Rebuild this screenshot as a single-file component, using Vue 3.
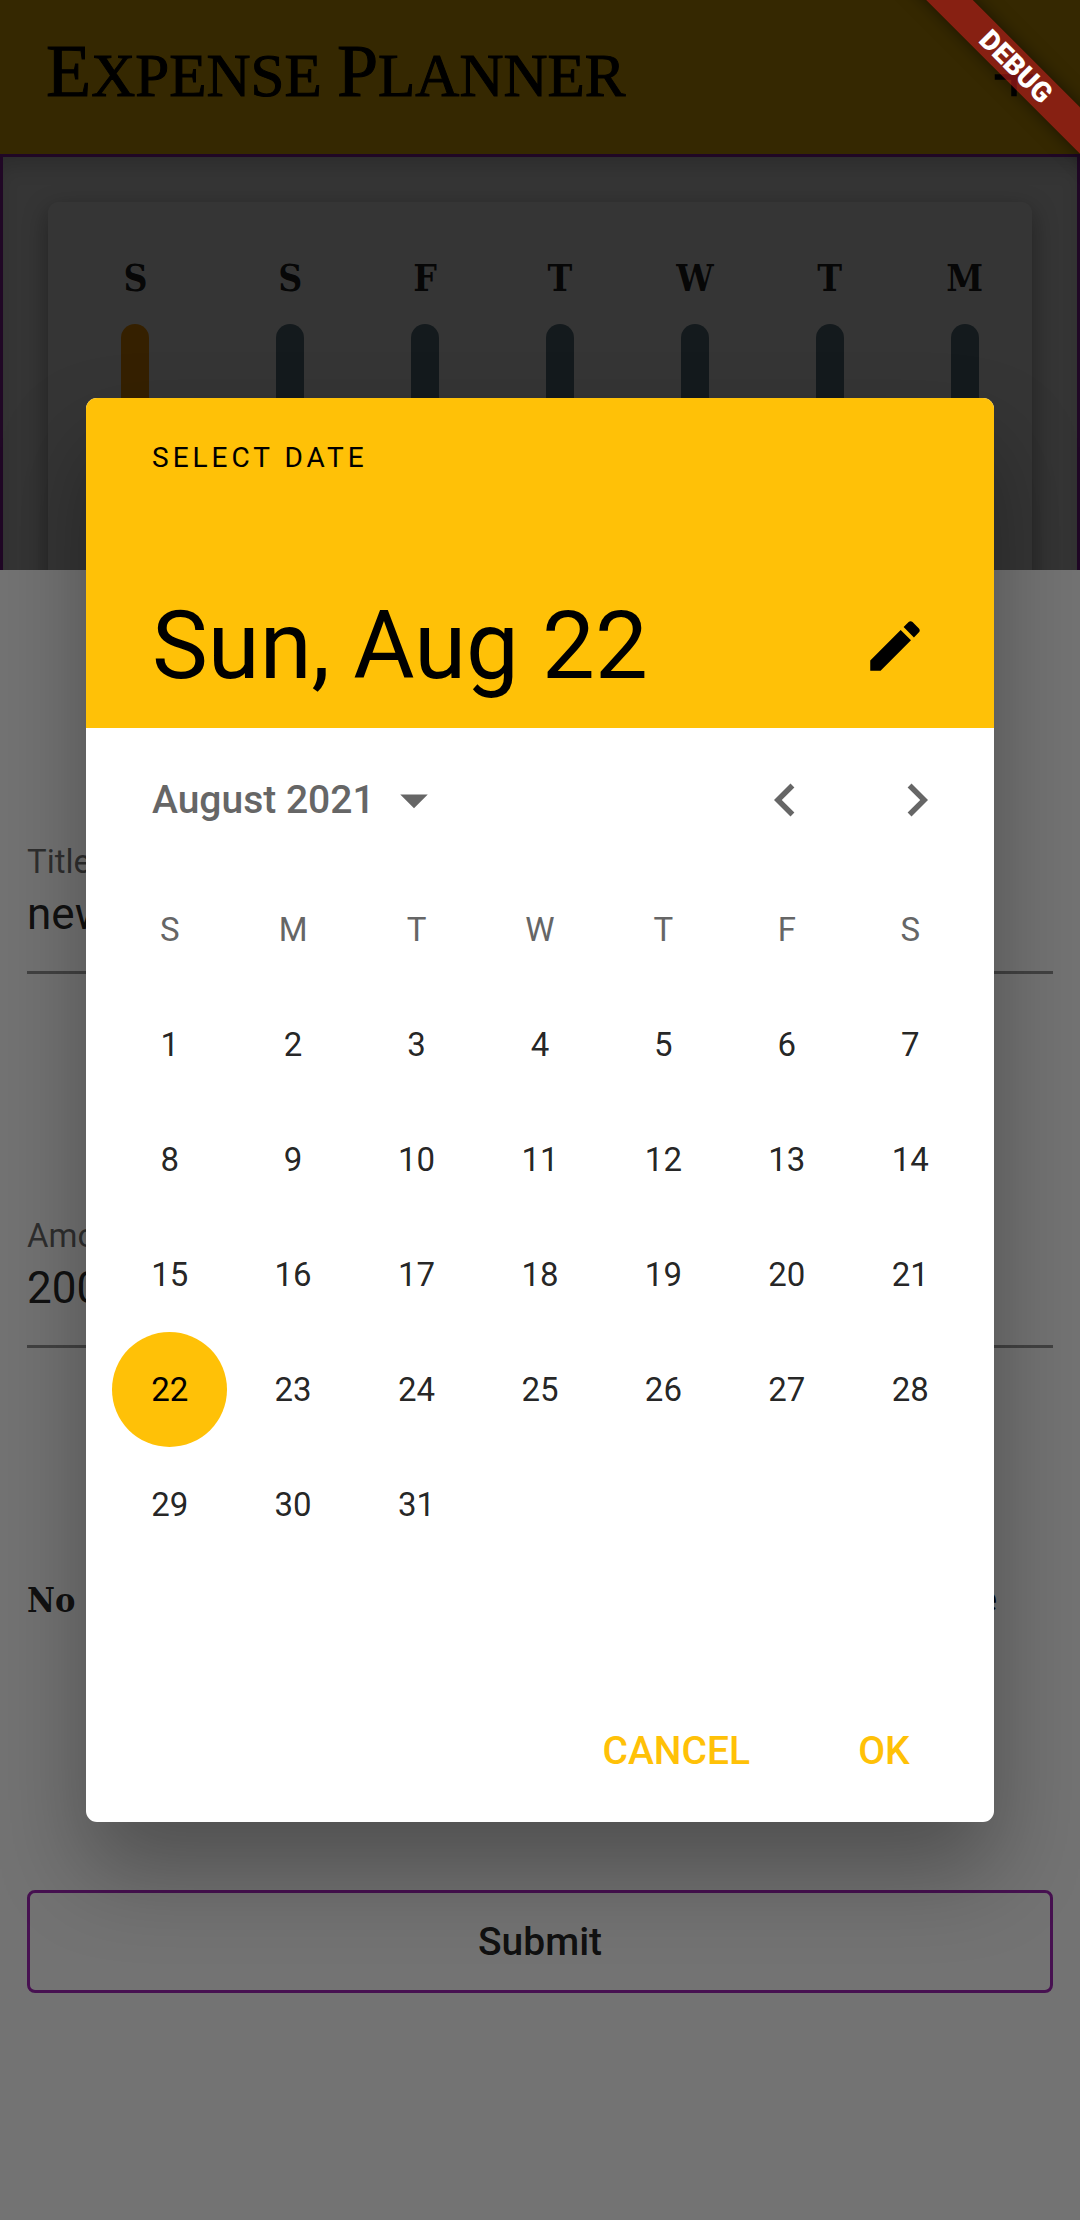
<script setup>
import { ref } from 'vue'

const title = ref('new')
const amount = ref('200')
const selected = ref(22)

const bars = [
  { day: 'S', spent: true },
  { day: 'S', spent: false },
  { day: 'F', spent: false },
  { day: 'T', spent: false },
  { day: 'W', spent: false },
  { day: 'T', spent: false },
  { day: 'M', spent: false },
]

const weekdays = ['S', 'M', 'T', 'W', 'T', 'F', 'S']

// August 2021 starts on a Sunday; the sixth row stays empty.
const weeks = Array.from({ length: 6 }, (_, w) =>
  Array.from({ length: 7 }, (_, d) => {
    const n = w * 7 + d + 1
    return n <= 31 ? n : null
  })
)
</script>

<template>
  <div class="app">
    <div class="home">
      <header class="app-bar">
        <h1><span class="initial">E</span>xpense <span class="initial">P</span>lanner</h1>
        <button class="icon-button" type="button" aria-label="Add">
          <svg class="icon" viewBox="0 0 24 24"><path d="M19 13h-6v6h-2v-6H5v-2h6V5h2v6h6v2z" /></svg>
        </button>
      </header>
      <main class="body">
        <section class="chart">
          <div v-for="(bar, i) in bars" :key="i" class="chart-column">
            <span class="chart-day">{{ bar.day }}</span>
            <div class="chart-bar" :class="{ spent: bar.spent }"></div>
          </div>
        </section>
      </main>
    </div>

    <div class="scrim"></div>

    <form class="sheet" @submit.prevent>
      <div class="field">
        <label for="title">Title</label>
        <input id="title" v-model="title" type="text" />
      </div>
      <div class="field">
        <label for="amount">Amount</label>
        <input id="amount" v-model="amount" type="text" inputmode="decimal" />
      </div>
      <div class="date-row">
        <span class="date-text">No date Chosen</span>
        <button class="choose" type="button">Choose Date</button>
      </div>
      <button class="submit" type="submit">Submit</button>
    </form>

    <div class="scrim"></div>

    <div class="dialog" role="dialog" aria-label="Select date">
      <div class="dialog-header">
        <span class="overline">SELECT DATE</span>
        <div class="headline-row">
          <h2>Sun, Aug 22</h2>
          <button class="icon-button" type="button" aria-label="Switch to input">
            <svg class="icon" viewBox="0 0 24 24">
              <path d="M3 17.25V21h3.75L17.81 9.94l-3.75-3.75L3 17.25zM20.71 7.04c.39-.39.39-1.02 0-1.41l-2.34-2.34c-.39-.39-1.02-.39-1.41 0l-1.83 1.83 3.75 3.75 1.83-1.83z" />
            </svg>
          </button>
        </div>
      </div>

      <div class="month-row">
        <button class="month" type="button">
          August 2021
          <svg class="icon" viewBox="0 0 24 24"><path d="M7 10l5 5 5-5z" /></svg>
        </button>
        <div class="month-nav">
          <button class="icon-button" type="button" aria-label="Previous month">
            <svg class="icon" viewBox="0 0 24 24"><path d="M15.41 7.41L14 6l-6 6 6 6 1.41-1.41L10.83 12z" /></svg>
          </button>
          <button class="icon-button" type="button" aria-label="Next month">
            <svg class="icon" viewBox="0 0 24 24"><path d="M10 6L8.59 7.41 13.17 12l-4.58 4.59L10 18l6-6z" /></svg>
          </button>
        </div>
      </div>

      <div class="calendar-wrap">
        <table class="calendar">
          <thead>
            <tr>
              <th v-for="(d, i) in weekdays" :key="i" scope="col">{{ d }}</th>
            </tr>
          </thead>
          <tbody>
            <tr v-for="(week, w) in weeks" :key="w">
              <td v-for="(day, d) in week" :key="d">
                <button
                  v-if="day"
                  class="day"
                  :class="{ selected: day === selected }"
                  type="button"
                  @click="selected = day"
                >{{ day }}</button>
              </td>
            </tr>
          </tbody>
        </table>
      </div>

      <div class="actions">
        <button type="button">CANCEL</button>
        <button type="button">OK</button>
      </div>
    </div>

    <div class="debug" aria-hidden="true"><div class="debug-band">DEBUG</div></div>
  </div>
</template>

<style>
body {
  margin: 0;
}
</style>

<style scoped>
.app {
  display: grid;
  grid-template: minmax(100vh, auto) / minmax(0, 1fr);
  overflow: hidden;
  font-family: Roboto, sans-serif;
  background: #fafafa;
}

/* Every layer shares the single grid cell and is stacked in source order. */
.app > * {
  grid-area: 1 / 1;
  min-width: 0;
}

button {
  display: flex;
  align-items: center;
  justify-content: center;
  margin: 0;
  padding: 0;
  border: 0;
  background: none;
  color: inherit;
  font: inherit;
  cursor: pointer;
}

.icon {
  display: block;
  width: 66px;
  height: 66px;
  fill: currentColor;
}

.scrim {
  z-index: 0;
  background: rgba(0, 0, 0, 0.54);
}

/* Home screen */
.home {
  display: flex;
  flex-direction: column;
}

.app-bar {
  display: flex;
  align-items: center;
  justify-content: space-between;
  height: 154px;
  padding: 0 33px 0 46px;
  box-sizing: border-box;
  background: #ffc107;
  color: #000;
}

.app-bar h1 {
  margin: 0;
  padding-bottom: 8px;
  font-family: "Liberation Serif", serif;
  font-size: 61px;
  font-weight: 400;
  line-height: 88px;
  text-transform: uppercase;
  -webkit-text-stroke: 1px #000;
}

.app-bar .initial {
  font-size: 74px;
}

.body {
  flex: 1;
  padding: 45px;
  border: 3px solid #9c27b0;
  box-shadow: inset 0 14px 22px -8px rgba(0, 0, 0, 0.2);
}

.chart {
  display: grid;
  grid-template-columns: 35fr repeat(6, 27fr);
  padding: 50px 0 55px;
  border-radius: 11px;
  background: #fefefe;
  box-shadow: 0 8px 24px rgba(0, 0, 0, 0.35);
}

.chart-column {
  display: flex;
  flex-direction: column;
  align-items: center;
  gap: 20px;
}

.chart-day {
  color: rgba(0, 0, 0, 0.87);
  font-family: "DejaVu Serif Condensed", "DejaVu Serif", serif;
  font-size: 37px;
  font-weight: 700;
  line-height: 52px;
}

.chart-bar {
  width: 28px;
  height: 300px;
  border-radius: 14px;
  background: #607d8b;
}

.chart-bar.spent {
  background: #ff9800;
}

/* New transaction sheet */
.sheet {
  z-index: 0;
  align-self: end;
  display: flex;
  flex-direction: column;
  padding: 272px 27px 227px;
  background: #fafafa;
  color: rgba(0, 0, 0, 0.87);
}

.field {
  display: flex;
  flex-direction: column;
  margin-bottom: 242px;
}

.field label {
  color: rgba(0, 0, 0, 0.6);
  font-size: 33px;
  line-height: 40px;
}

.field input {
  min-width: 0;
  height: 92px;
  box-sizing: border-box;
  padding: 0 0 26px;
  border: 0;
  border-bottom: 3px solid rgba(0, 0, 0, 0.42);
  border-radius: 0;
  outline: 0;
  background: none;
  color: inherit;
  font: 44px Roboto, sans-serif;
}

.date-row {
  display: flex;
  align-items: center;
  justify-content: space-between;
  height: 60px;
  margin: -20px 0 260px;
  padding-right: 56px;
}

.date-text {
  font-family: "DejaVu Serif Condensed", "DejaVu Serif", serif;
  font-size: 34px;
  font-weight: 700;
}

.choose {
  color: #000;
  font-size: 36px;
}

.submit {
  height: 103px;
  border: 3px solid #9c27b0;
  border-radius: 8px;
  font-size: 39px;
  font-weight: 500;
}

/* Date picker */
.dialog {
  z-index: 0;
  place-self: center;
  width: calc(100% - 172px);
  max-width: 908px;
  overflow: hidden;
  border-radius: 11px;
  background: #fff;
  box-shadow: 0 48px 90px rgba(0, 0, 0, 0.31);
}

.dialog-header {
  display: flex;
  flex-direction: column;
  justify-content: space-between;
  height: 330px;
  box-sizing: border-box;
  padding: 42px 66px 27px;
  background: #ffc107;
  color: #000;
}

.overline {
  font-size: 28px;
  letter-spacing: 4px;
  line-height: 36px;
}

.headline-row {
  display: flex;
  align-items: center;
  justify-content: space-between;
}

.headline-row h2 {
  margin: 0;
  font-size: 94px;
  font-weight: 400;
  line-height: 110px;
}

.month-row {
  display: flex;
  align-items: center;
  justify-content: space-between;
  height: 143px;
  padding: 0 11px 0 66px;
  color: #666;
}

.month {
  gap: 6px;
  font-size: 39px;
  font-weight: 500;
}

.month-nav {
  display: flex;
}

.month-nav .icon-button {
  width: 132px;
  height: 132px;
}

.calendar-wrap {
  padding: 0 22px 2px;
}

.calendar {
  width: 100%;
  table-layout: fixed;
  border-collapse: collapse;
  color: rgba(0, 0, 0, 0.87);
  font-size: 33px;
}

.calendar th,
.calendar td {
  height: 115px;
  padding: 0;
  text-align: center;
  vertical-align: middle;
}

.calendar th {
  height: 116px;
  color: #666;
  font-weight: 400;
}

.day {
  width: 115px;
  height: 115px;
  margin: 0 auto;
  border-radius: 50%;
}

.day.selected {
  background: #ffc107;
  color: #000;
}

.actions {
  display: flex;
  align-items: center;
  justify-content: flex-end;
  gap: 24px;
  height: 143px;
  padding: 0 22px;
  color: #ffc107;
}

.actions button {
  min-width: 176px;
  height: 99px;
  padding: 0 22px;
  font-size: 39px;
  font-weight: 500;
}

/* Corner ribbon */
.debug {
  z-index: 0;
  position: relative;
  place-self: start end;
  width: 220px;
  height: 220px;
  overflow: hidden;
  pointer-events: none;
}

.debug-band {
  position: absolute;
  top: 50px;
  right: -76px;
  width: 280px;
  background: rgba(183, 28, 28, 0.63);
  box-shadow: 0 0 17px rgba(0, 0, 0, 0.5);
  color: #fff;
  font-size: 28px;
  font-weight: 900;
  line-height: 33px;
  text-align: center;
  transform: rotate(45deg);
}
</style>
